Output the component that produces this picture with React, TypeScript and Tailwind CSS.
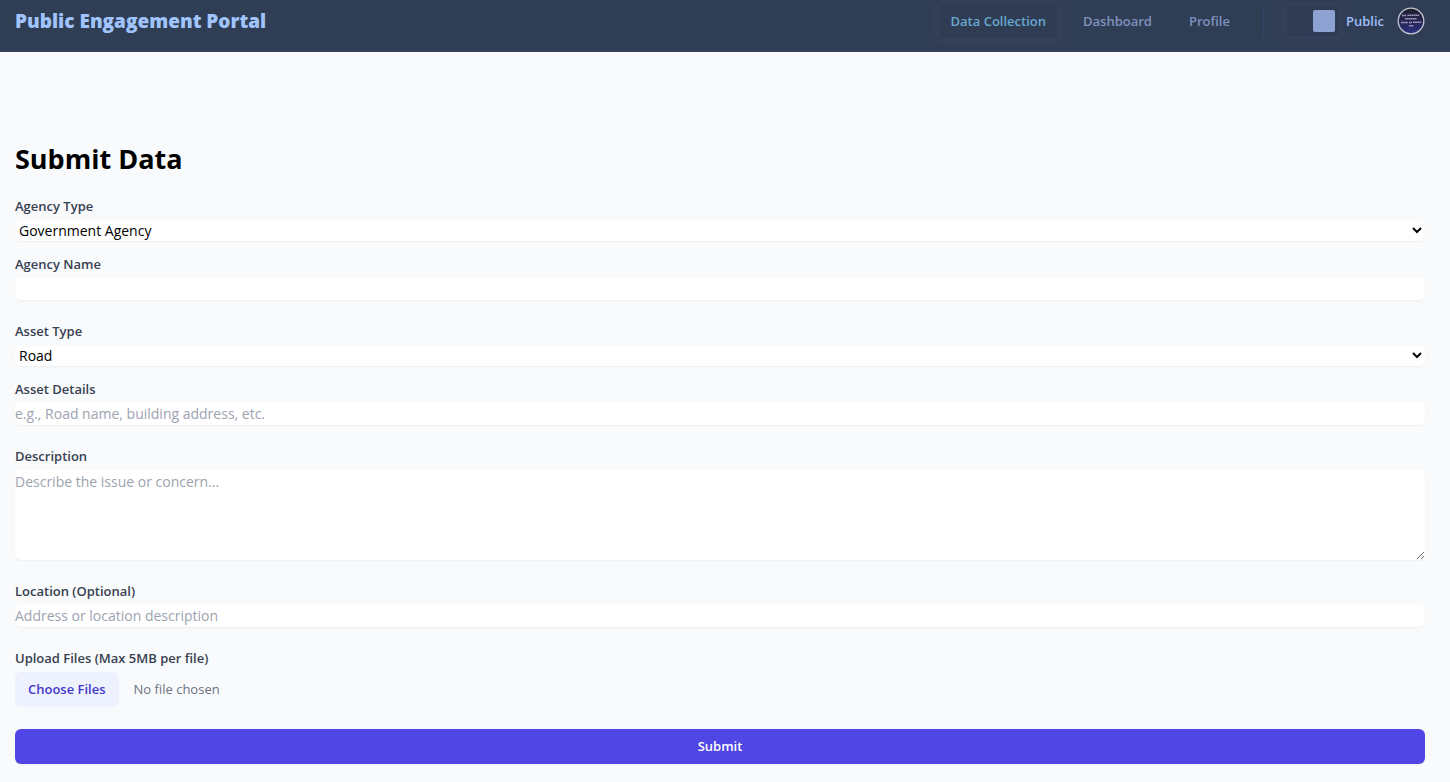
import type { ReactNode } from 'react';

const labelClass = 'block text-[13px] leading-[19px] font-semibold text-[#374151]';
const fieldClass = 'block w-full rounded-md bg-white text-[14px] shadow-xs placeholder:text-[#9ca3af]';
const selectClass = `${fieldClass} mt-1 h-[21px]`;
const inputClass = `${fieldClass} mt-[3px] h-[23px]`;

function Field({ id, label, children }: { id: string; label: string; children: ReactNode }) {
  return (
    <div>
      <label htmlFor={id} className={labelClass}>
        {label}
      </label>
      {children}
    </div>
  );
}

function Avatar() {
  return (
    <svg viewBox="0 0 28 28" className="size-7" role="img" aria-label="User avatar">
      <defs>
        <linearGradient id="avatar-fill" x1="0" y1="0" x2="0" y2="1">
          <stop offset="0" stopColor="#201f2b" />
          <stop offset="0.45" stopColor="#252452" />
          <stop offset="1" stopColor="#2e3080" />
        </linearGradient>
      </defs>
      <circle cx="14" cy="14" r="12.8" fill="url(#avatar-fill)" stroke="#c5c8cd" strokeWidth="1.3" />
      <g stroke="#c9bfd9" strokeWidth="1.5" opacity="0.75">
        <path d="M5 8.6h4.5M10.5 8.2h11.5" strokeDasharray="1.8 .3" />
        <path d="M8 11.8h11.5" strokeDasharray="1.7 .3" />
        <path d="M4 15.4h7M12 15.4h3M16 15.2h8.5" strokeDasharray="1.8 .3" />
        <path d="M12 18.8h4.5" strokeDasharray="1.8 .3" />
      </g>
    </svg>
  );
}

function Header() {
  return (
    <header className="flex h-[52px] items-start justify-between border-b border-[#3a4264] bg-[#303e55] pr-[25px] pl-[15px]">
      <a href="#" className="flex h-[42px] items-center text-[19px] font-extrabold text-[#a0c4fd]">
        Public Engagement Portal
      </a>
      <div className="flex h-[42px] items-center">
        <nav className="flex items-center gap-[13px] text-[13px] leading-[21px] font-semibold text-[#7e92bd]">
          <a
            href="#"
            className="flex h-[34px] items-center rounded-xs bg-[#2f3c54] px-3 text-[#67a9cf] shadow-[0_1px_8px_1px_#384564]"
          >
            Data Collection
          </a>
          <a href="#" className="px-3">
            Dashboard
          </a>
          <a href="#" className="px-3">
            Profile
          </a>
        </nav>
        <div className="ml-[21px] h-[30px] w-px bg-[#38456a]" />
        <button
          type="button"
          role="switch"
          aria-checked="true"
          aria-label="Public view"
          className="ml-[23px] flex h-[30px] w-[52px] items-center justify-end rounded-xs bg-[#2f3c54] pr-1 shadow-[0_1px_8px_1px_#384564]"
        >
          <span className="size-[22px] rounded-xs bg-[#8da2d0]" />
        </button>
        <span className="ml-[7px] text-[13px] leading-[21px] font-semibold text-[#a0bffa]">Public</span>
        <button type="button" aria-label="Account" className="ml-[13px]">
          <Avatar />
        </button>
      </div>
    </header>
  );
}

export default function App() {
  return (
    <div className="min-h-screen bg-[#f9fafc] font-['Open_Sans','Noto_Sans',sans-serif] text-black">
      <Header />
      <main className="pt-[90px] pr-[25px] pb-[17px] pl-[15px]">
        <h1 className="mb-[21px] text-[27px] leading-[34px] font-bold">Submit Data</h1>
        <form className="flex flex-col gap-[22px]">
          <div className="flex flex-col gap-[14px]">
            <Field id="agency-type" label="Agency Type">
              <select id="agency-type" className={selectClass}>
                <option>Government Agency</option>
                <option>Private Agency</option>
              </select>
            </Field>
            <Field id="agency-name" label="Agency Name">
              <input id="agency-name" type="text" className={inputClass} />
            </Field>
          </div>
          <div className="flex flex-col gap-[14px]">
            <Field id="asset-type" label="Asset Type">
              <select id="asset-type" className={selectClass}>
                <option>Road</option>
                <option>Building</option>
              </select>
            </Field>
            <Field id="asset-details" label="Asset Details">
              <input
                id="asset-details"
                type="text"
                placeholder="e.g., Road name, building address, etc."
                className={inputClass}
              />
            </Field>
          </div>
          <Field id="description" label="Description">
            <textarea
              id="description"
              placeholder="Describe the issue or concern..."
              className={`${fieldClass} mt-1 h-[90px] leading-[23px]`}
            />
          </Field>
          <Field id="location" label="Location (Optional)">
            <input
              id="location"
              type="text"
              placeholder="Address or location description"
              className={inputClass}
            />
          </Field>
          <Field id="files" label="Upload Files (Max 5MB per file)">
            <input
              id="files"
              type="file"
              multiple
              className="mt-1 block w-full text-[13px] text-[#6b7280] file:mr-[15px] file:h-[35px] file:rounded-md file:bg-[#eef2ff] file:px-[13px] file:font-semibold file:text-[#4338ca]"
            />
          </Field>
          <button
            type="submit"
            className="h-[35px] w-full rounded-md bg-[#4f46e5] text-[13px] font-semibold text-white shadow-xs"
          >
            Submit
          </button>
        </form>
      </main>
    </div>
  );
}
